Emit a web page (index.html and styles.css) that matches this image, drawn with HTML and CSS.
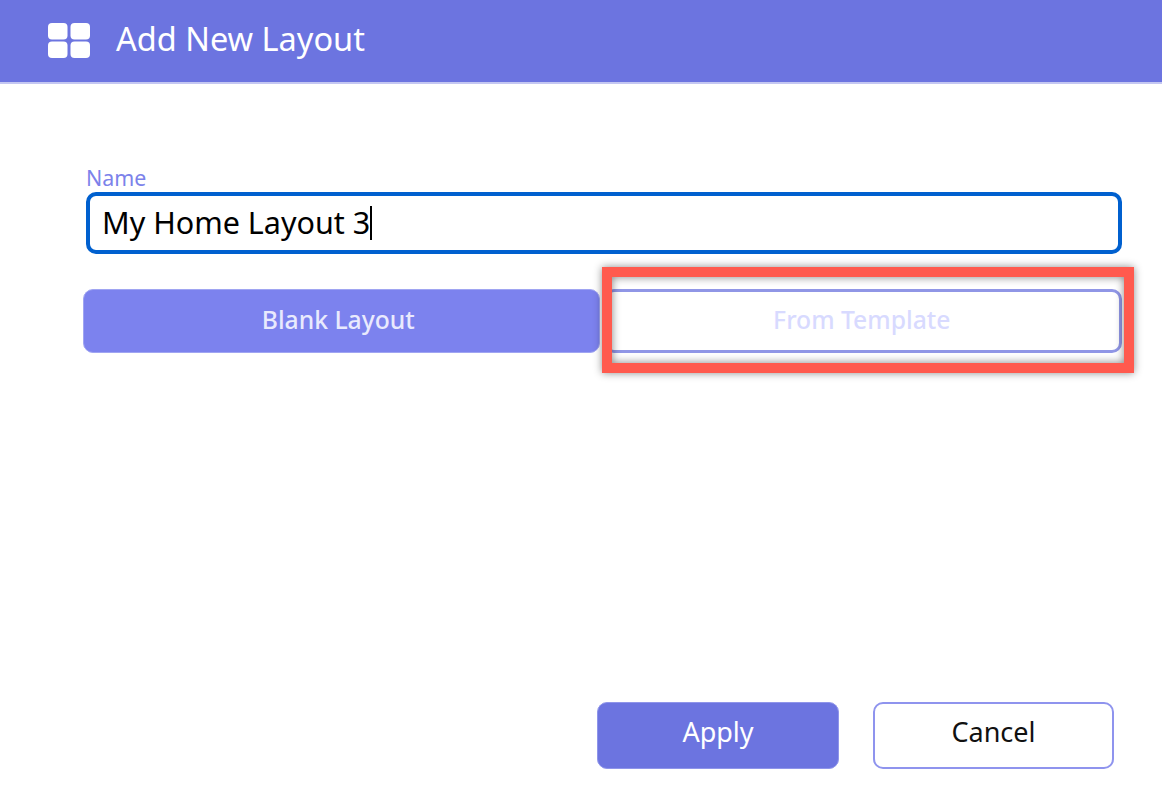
FILE: index.html
```html
<!DOCTYPE html>
<html lang="en">
<head>
<meta charset="utf-8">
<title>Add New Layout</title>
<link rel="stylesheet" href="styles.css">
</head>
<body>
<div class="dialog">
  <header class="header">
    <svg class="header-icon" viewBox="0 0 42 35" width="42" height="35" aria-hidden="true">
      <rect x="0" y="0" width="19.5" height="16.5" rx="4" fill="#fff"/>
      <rect x="22.5" y="0" width="19.5" height="16.5" rx="4" fill="#fff"/>
      <rect x="0" y="18.5" width="19.5" height="16.5" rx="4" fill="#fff"/>
      <rect x="22.5" y="18.5" width="19.5" height="16.5" rx="4" fill="#fff"/>
    </svg>
    <h1 class="title">Add New Layout</h1>
  </header>
  <main class="body">
    <label class="label">Name</label>
    <div class="input"><span>My Home Layout 3</span><i class="caret"></i></div>
    <div class="choices">
      <button class="btn choice-active">Blank Layout</button>
      <button class="btn choice-idle">From Template</button>
    </div>
    <div class="highlight"></div>
  </main>
  <footer class="footer">
    <button class="btn btn-apply">Apply</button>
    <button class="btn btn-cancel">Cancel</button>
  </footer>
</div>
</body>
</html>
```
FILE: styles.css
```css
* { box-sizing: border-box; }
html, body { margin: 0; height: 100%; }
body { background: #fff; font-family: "Noto Sans", "Open Sans", sans-serif; overflow: hidden; }
.dialog { width: 1162px; height: 800px; display: flex; flex-direction: column; position: relative; background: #fff; }
.header { height: 84px; flex: none; display: flex; align-items: center; padding-left: 48px; gap: 26px; background: #6c74e0; border-bottom: 2px solid #c4c7f2; padding-bottom: 2px; }
.header-icon { flex: none; }
.title { margin: 0 0 2px; font-size: 32.5px; font-weight: 400; color: #fff; line-height: 40px; }
.body { flex: 1; padding: 80px 40px 0 83px; display: flex; flex-direction: column; }
.label { margin-left: 3px; font-size: 21.4px; line-height: 28px; height: 28px; color: #7c82ea; }
.input { margin-left: 3px; height: 62px; border: 4px solid #0060cf; border-radius: 10px; display: flex; align-items: center; padding: 0 0 2px 12px; font-size: 30.5px; color: #000; background: #fff; }
.caret { display: block; width: 2px; height: 34px; background: #000; margin: 2px 0 0 0; }
.choices { margin-top: 35px; display: flex; gap: 4px; }
.btn { font-family: inherit; cursor: pointer; border-radius: 10px; padding: 0; }
.choice-active, .choice-idle { height: 64px; font-size: 24.7px; font-weight: 500; padding-bottom: 3px; }
.choice-active { width: 517px; background: #7c82ee; color: #e9eafd; border: 1px solid #a0a5f2; padding-right: 6px; }
.choice-idle { width: 519px; background: #fff; color: #d8daff; border: 3px solid #9096e6; padding-right: 2px; }
.highlight { position: absolute; left: 602px; top: 267px; width: 532px; height: 106px; border: 10px solid #ff5a4e; box-shadow: 0 0 8px rgba(0,0,0,.45), inset 0 0 8px rgba(0,0,0,.5); }
.footer { flex: none; display: flex; justify-content: flex-end; gap: 34px; padding: 0 48px 31px 0; }
.btn-apply, .btn-cancel { height: 67px; font-size: 27px; padding-bottom: 8px; }
.btn-apply { width: 242px; background: #6c74e0; color: #fff; border: 1px solid #8f95ea; }
.btn-cancel { width: 241px; background: #fff; color: #111; border: 2px solid #8f94ee; }
```
